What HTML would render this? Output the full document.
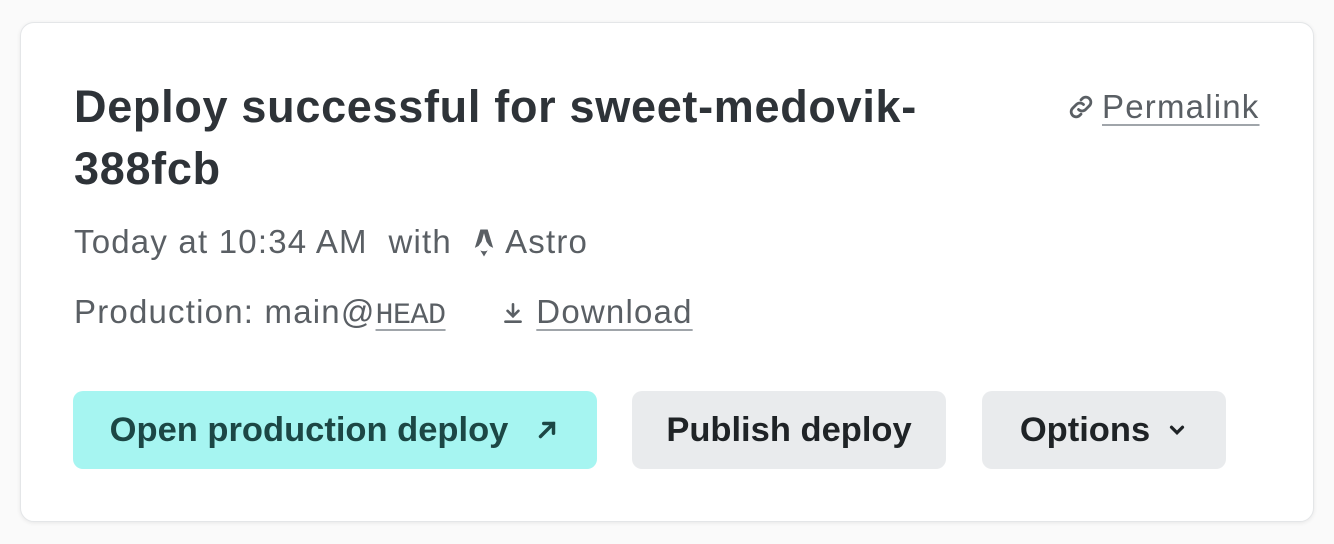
<!DOCTYPE html>
<html><head><meta charset="utf-8"><style>
*{margin:0;padding:0;box-sizing:border-box}
body{width:1334px;height:544px;background:#fafafa;font-family:"Liberation Sans",sans-serif;position:relative;overflow:hidden}
.card{position:absolute;left:20px;top:22px;width:1294px;height:500px;background:#fff;border:1px solid #e4e6e8;border-radius:14px;box-shadow:0 1px 4px rgba(0,0,0,.08)}
.abs{position:absolute;white-space:nowrap}
h1{position:absolute;left:74px;top:76px;font-size:45px;line-height:62px;font-weight:bold;color:#2e3338;letter-spacing:0.7px}
.meta{font-size:33px;color:#5a5f64;letter-spacing:1.2px}
a{color:#5a5f64;text-decoration:underline;text-decoration-color:#a0a5aa;text-underline-offset:6px;text-decoration-thickness:2px}
.btn{position:absolute;top:391px;height:78px;border-radius:10px;font-size:34.5px;font-weight:bold;display:flex;align-items:center;justify-content:center;color:#1f2326}
</style></head><body>
<div class="card"></div>
<h1>Deploy successful for sweet-medovik-<br>388fcb</h1>
<div class="abs meta" style="left:1066px;top:88px;">
<svg width="30" height="30" viewBox="0 0 24 24" style="vertical-align:-4px" fill="none" stroke="#5a5f64" stroke-width="2.2" stroke-linecap="round"><path d="M10 14a4 4 0 0 0 5.7 0l3-3a4 4 0 0 0-5.7-5.7l-1 1"/><path d="M14 10a4 4 0 0 0-5.7 0l-3 3a4 4 0 0 0 5.7 5.7l1-1"/></svg><a href="#" style="margin-left:6px">Permalink</a></div>
<div class="abs meta" style="left:74px;top:223px;">Today at 10:34 AM&nbsp; with&nbsp;
<svg width="22" height="32" viewBox="0 0 18 26" style="vertical-align:-6px" fill="#5a5f64"><path d="M6 2h6l4.5 15-3-1.5L11 12 9 5 7 12 4.5 15.5 1.5 17z"/><path d="M6 19q3 1.5 6 0l-3 5z"/></svg>&nbsp;Astro</div>
<div class="abs meta" style="left:74px;top:293px;">Production: main@<a href="#" style="font-family:'Liberation Mono',monospace;font-size:30px;letter-spacing:-0.5px">HEAD</a>
<svg width="26" height="28" viewBox="0 0 24 24" style="vertical-align:-4px;margin-left:44px" fill="none" stroke="#5a5f64" stroke-width="2.4" stroke-linecap="round"><path d="M12 4v11M7 10l5 5 5-5M5 20h14"/></svg> <a href="#">Download</a></div>
<div class="btn" style="left:73px;width:524px;background:#a6f5f1;color:#1c4745">Open production deploy
<svg width="26" height="26" viewBox="0 0 24 24" style="margin-left:26px" fill="none" stroke="#1c4745" stroke-width="3.2" stroke-linecap="round"><path d="M6 18L18 6M9 6h9v9"/></svg></div>
<div class="btn" style="left:632px;width:314px;background:#e9ebed">Publish deploy</div>
<div class="btn" style="left:982px;width:244px;background:#e9ebed">Options
<svg width="22" height="22" viewBox="0 0 24 24" style="margin-left:16px" fill="none" stroke="#1f2326" stroke-width="3.5" stroke-linecap="round"><path d="M6 9l6 6 6-6"/></svg></div>
</body></html>
